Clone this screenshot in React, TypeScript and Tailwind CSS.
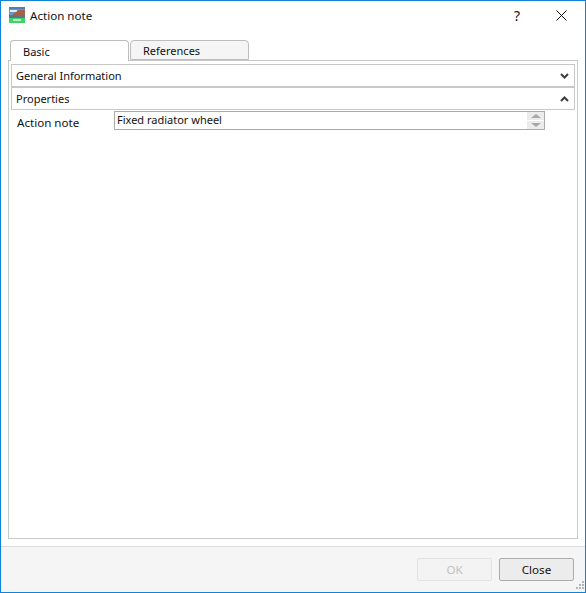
const AppIcon = () => (
    <svg width="16" height="16" viewBox="0 0 16 16" className="mt-[-1px] shrink-0">
        <rect x="0" y="0" width="16" height="11" fill="#6f93bd" />
        <rect x="0" y="0" width="16" height="2" fill="#4f7fb8" />
        <rect x="1" y="3" width="7" height="2" fill="#e4ebf2" />
        <path d="M4 7 L10 3 L16 3 L16 8 L4 8 Z" fill="#a5604c" />
        <rect x="0" y="8" width="16" height="3" fill="#66707e" />
        <rect x="0" y="11" width="16" height="5" fill="#3fd467" />
        <rect x="4" y="12" width="8" height="2" fill="#b4f0c4" />
    </svg>
);

const Chevron = ({ up }: { up: boolean }) => (
    <svg width="9" height="6" viewBox="0 0 9 6">
        <path
            d={up ? 'M1 5 L4.5 1.5 L8 5' : 'M1 1 L4.5 4.5 L8 1'}
            stroke="#3c3c3c"
            strokeWidth="2"
            fill="none"
        />
    </svg>
);

const SectionHeader = ({ label, open }: { label: string; open: boolean }) => (
    <div className="flex h-[23px] items-center justify-between border border-[#c8c8c8] bg-white pl-[4px] pr-[5px]">
        <span className="pt-[2px]">{label}</span>
        <Chevron up={open} />
    </div>
);

const App = () => {
    return (
        <div
            className="flex h-[593px] w-[586px] flex-col border border-[#0f83d9] bg-white text-[11px] text-[#111111]"
            style={{ fontFamily: '"Noto Sans", sans-serif' }}
        >
            {/* title bar */}
            <div className="flex h-[29px] shrink-0 items-center pl-[8px]">
                <AppIcon />
                <span className="ml-[5px] flex-1 text-[11.6px]">Action note</span>
                <span className="mr-[36px] text-[14px]">?</span>
                <svg width="11" height="11" viewBox="0 0 11 11" className="mr-[18px]">
                    <path d="M0.5 0.5 L10.5 10.5 M10.5 0.5 L0.5 10.5" stroke="#111111" strokeWidth="1" fill="none" />
                </svg>
            </div>

            {/* tabs */}
            <div className="mt-[10px] flex h-[20px] shrink-0 items-end pl-[9px]">
                <div className="relative z-10 mb-[-1px] flex h-[21px] w-[119px] items-center rounded-t-[4px] border border-b-0 border-[#bdbdbd] bg-white pl-[12px] pt-[3px]">
                    Basic
                </div>
                <div className="ml-[1px] flex h-[20px] w-[119px] items-center rounded-t-[4px] border border-[#bdbdbd] bg-[#f5f5f5] pl-[12px] pt-[3px]">
                    References
                </div>
            </div>

            {/* tab pane */}
            <div className="mx-[7px] flex h-[479px] shrink-0 flex-col border border-[#c8c8c8] bg-white px-[2px] pt-[3px]">
                <SectionHeader label="General Information" open={false} />
                <SectionHeader label="Properties" open />
                <div className="mt-[1px] flex h-[19px] items-center pl-[6px]">
                    <span className="w-[97px] pt-[5px] text-[11.6px]">Action note</span>
                    <div className="flex h-[19px] w-[431px] items-center justify-between border border-[#ababab] pl-[2px]">
                        <span>Fixed radiator wheel</span>
                        <div className="flex h-full w-[17px] flex-col gap-[1px] bg-white">
                            <div className="flex flex-1 items-center justify-center bg-[#ececec]">
                                <div className="h-0 w-0 border-x-[5px] border-b-[4px] border-x-transparent border-b-[#a8a8a8]" />
                            </div>
                            <div className="flex flex-1 items-center justify-center bg-[#ececec]">
                                <div className="h-0 w-0 border-x-[5px] border-t-[4px] border-x-transparent border-t-[#a8a8a8]" />
                            </div>
                        </div>
                    </div>
                </div>
            </div>

            {/* footer */}
            <div className="relative mt-[7px] flex flex-1 items-start justify-end gap-[7px] border-t border-[#dcdcdc] bg-[#f5f5f5] pr-[11px] pt-[11px] text-[11.6px]">
                <button className="h-[23px] w-[75px] rounded-[2px] border border-[#e3e3e3] bg-[#f3f3f3] text-[#c2c2c2]">
                    OK
                </button>
                <button className="h-[23px] w-[75px] rounded-[2px] border border-[#adadad] bg-[#ececec] text-[#111111]">
                    Close
                </button>
                <svg width="11" height="11" viewBox="0 0 11 11" className="absolute bottom-0 right-0" fill="#b5b5b5">
                    <rect x="8" y="0" width="2" height="2" />
                    <rect x="5" y="3" width="2" height="2" />
                    <rect x="8" y="3" width="2" height="2" />
                    <rect x="2" y="6" width="2" height="2" />
                    <rect x="5" y="6" width="2" height="2" />
                    <rect x="8" y="6" width="2" height="2" />
                </svg>
            </div>
        </div>
    );
};

export default App;
